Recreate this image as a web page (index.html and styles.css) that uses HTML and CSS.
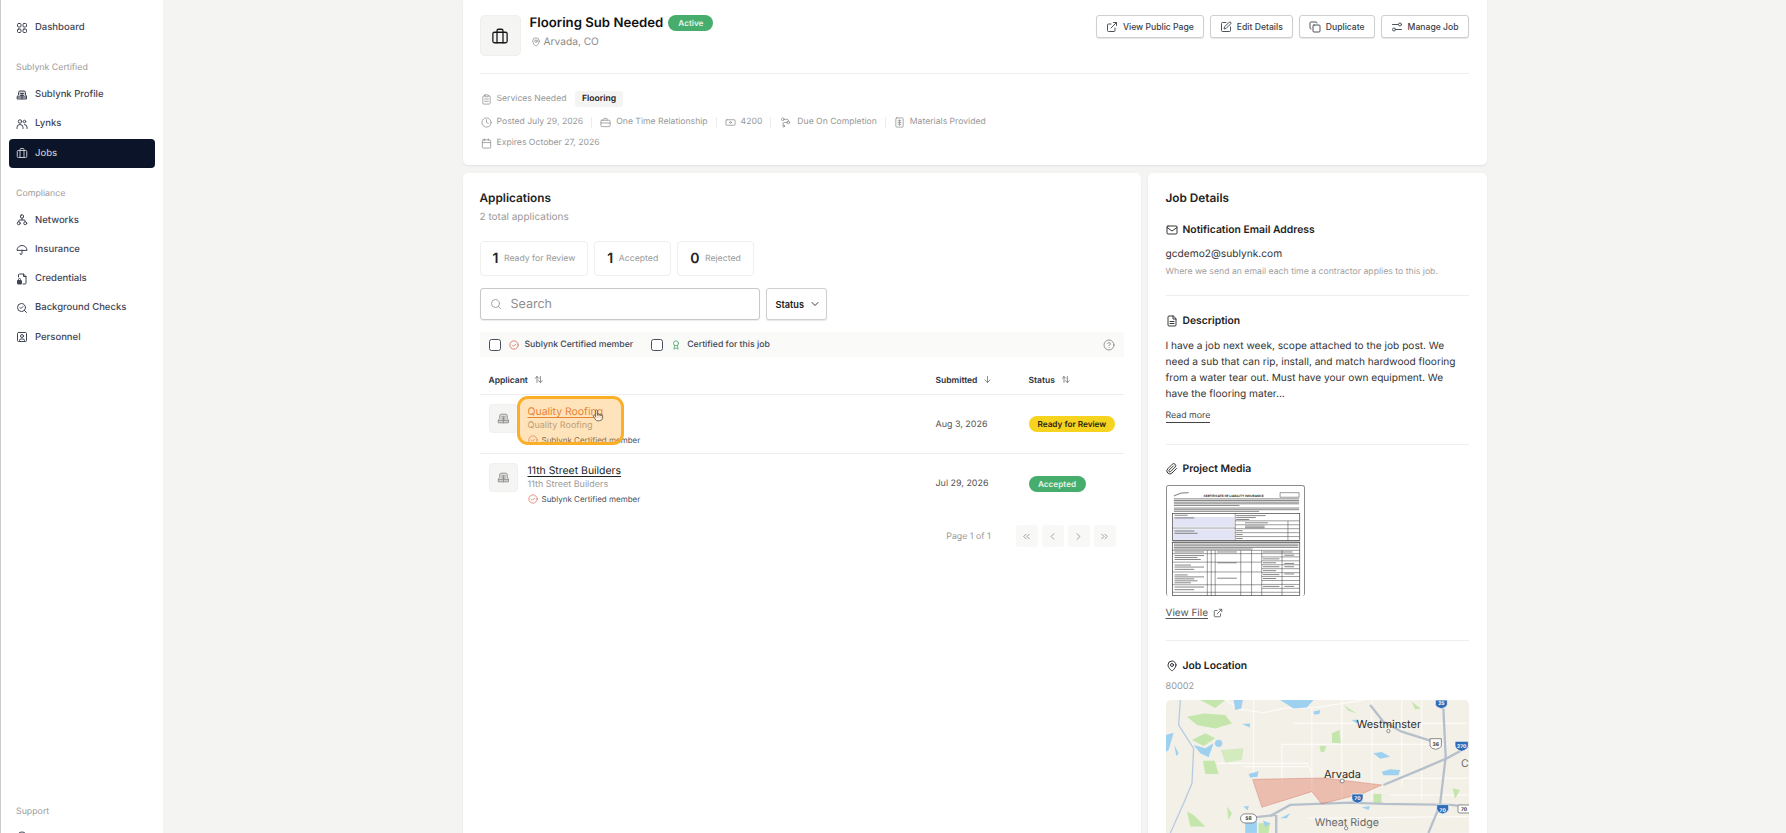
FILE: index.html
```html
<!DOCTYPE html>
<html lang="en">
  <head>
    <meta charset="UTF-8" />
    <meta name="viewport" content="width=device-width, initial-scale=1.0" />
    <title>Flooring Sub Needed</title>
    <link rel="stylesheet" href="styles.css">
  </head>
  <body>
    <svg class="icon-defs" aria-hidden="true">
      <symbol id="i-grid" viewBox="0 0 24 24"><rect x="3" y="3" width="7" height="7" rx="2"/><rect x="14" y="3" width="7" height="7" rx="2"/><rect x="3" y="14" width="7" height="7" rx="2"/><rect x="14" y="14" width="7" height="7" rx="2"/></symbol>
      <symbol id="i-building" viewBox="0 0 24 24"><path d="M3 20h18v-6l-2-2V7a3 3 0 0 0-3-3H8a3 3 0 0 0-3 3v5l-2 2z" fill="currentColor" fill-opacity=".25"/><path d="M9 9h6M9 13h6M3 16h18M12 9v11"/></symbol>
      <symbol id="i-users" viewBox="0 0 24 24"><circle cx="8" cy="7" r="3.5"/><circle cx="17" cy="7" r="2.5"/><path d="M2 21v-2a6 6 0 0 1 12 0v2M17 13a5 5 0 0 1 5 5v3"/></symbol>
      <symbol id="i-case" viewBox="0 0 24 24"><rect x="2.5" y="7" width="19" height="14" rx="2"/><path d="M8 21V5a2 2 0 0 1 2-2h4a2 2 0 0 1 2 2v16"/></symbol>
      <symbol id="i-network" viewBox="0 0 24 24"><rect x="9" y="2" width="6" height="6" rx="1.5"/><circle cx="5.5" cy="18.5" r="3"/><circle cx="18.5" cy="18.5" r="3"/><path d="M12 8v4M5.5 15.5V14a2 2 0 0 1 2-2h9a2 2 0 0 1 2 2v1.500"/></symbol>
      <symbol id="i-umbrella" viewBox="0 0 24 24"><path d="M2 12a10 9 0 0 1 20 0z"/><path d="M12 12v7a2 2 0 0 1-4 0"/></symbol>
      <symbol id="i-file-lock" viewBox="0 0 24 24"><path d="M5 8V4a2 2 0 0 1 2-2h8l5 5v13a2 2 0 0 1-2 2h-4"/><path d="M15 2v5h5"/><rect x="3" y="15" width="8" height="7" rx="1" fill="currentColor"/><path d="M5 15v-2a2 2 0 0 1 4 0v2"/></symbol>
      <symbol id="i-search-check" viewBox="0 0 24 24"><circle cx="11" cy="11" r="8"/><path d="m21 21-4.300-4.300M8 11l2 2 4-4"/></symbol>
      <symbol id="i-badge" viewBox="0 0 24 24"><rect x="3" y="3" width="18" height="18" rx="2"/><circle cx="12" cy="10" r="3"/><path d="M7 21v-2a3 3 0 0 1 3-3h4a3 3 0 0 1 3 3v2"/></symbol>
      <symbol id="i-help" viewBox="0 0 24 24"><circle cx="12" cy="12" r="10"/><path d="M9.100 9a3 3 0 0 1 5.800 1c0 2-3 3-3 3M12 17h.01"/></symbol>
      <symbol id="i-pin" viewBox="0 0 24 24"><path d="M20 10c0 6-8 12-8 12s-8-6-8-12a8 8 0 0 1 16 0z"/><circle cx="12" cy="10" r="3"/></symbol>
      <symbol id="i-external" viewBox="0 0 24 24"><path d="M18 14v5a2 2 0 0 1-2 2H5a2 2 0 0 1-2-2V8a2 2 0 0 1 2-2h5M15 3h6v6M10 14 21 3"/></symbol>
      <symbol id="i-edit" viewBox="0 0 24 24"><path d="M12 3H5a2 2 0 0 0-2 2v14a2 2 0 0 0 2 2h14a2 2 0 0 0 2-2v-7"/><path d="M18.400 2.600a2.100 2.100 0 0 1 3 3L12 15l-4 1 1-4z"/></symbol>
      <symbol id="i-copy" viewBox="0 0 24 24"><rect x="8" y="8" width="14" height="14" rx="2"/><path d="M4 16a2 2 0 0 1-2-2V4a2 2 0 0 1 2-2h10a2 2 0 0 1 2 2"/></symbol>
      <symbol id="i-sliders" viewBox="0 0 24 24"><path d="M14 7H3M21 17H10"/><circle cx="18" cy="7" r="3"/><circle cx="6" cy="17" r="3"/></symbol>
      <symbol id="i-clipboard" viewBox="0 0 24 24"><rect x="8" y="2" width="8" height="4" rx="1"/><path d="M16 4h2a2 2 0 0 1 2 2v14a2 2 0 0 1-2 2H6a2 2 0 0 1-2-2V6a2 2 0 0 1 2-2h2M8 11h8M8 16h8"/></symbol>
      <symbol id="i-clock" viewBox="0 0 24 24"><circle cx="12" cy="12" r="10"/><path d="M12 6v6l4 2"/></symbol>
      <symbol id="i-briefcase" viewBox="0 0 24 24"><rect x="2" y="7" width="20" height="14" rx="2"/><path d="M16 7V5a2 2 0 0 0-2-2h-4a2 2 0 0 0-2 2v2M2 13h20"/></symbol>
      <symbol id="i-banknote" viewBox="0 0 24 24"><rect x="2" y="6" width="20" height="12" rx="2"/><circle cx="12" cy="12" r="2"/></symbol>
      <symbol id="i-route" viewBox="0 0 24 24"><circle cx="6" cy="5" r="3"/><circle cx="18" cy="12" r="3"/><circle cx="8" cy="20" r="2"/><path d="M9 5h6a3 3 0 0 1 0 7H9a3 3 0 0 0 0 6"/></symbol>
      <symbol id="i-receipt" viewBox="0 0 24 24"><rect x="4" y="2" width="16" height="20" rx="2"/><path d="M9 8h6M9 12h6M9 16h6M12 6v12"/></symbol>
      <symbol id="i-calendar" viewBox="0 0 24 24"><rect x="3" y="4" width="18" height="18" rx="2"/><path d="M16 2v4M8 2v4M3 10h18"/></symbol>
      <symbol id="i-search" viewBox="0 0 24 24"><circle cx="11" cy="11" r="8"/><path d="m21 21-4.300-4.300"/></symbol>
      <symbol id="i-chevron" viewBox="0 0 24 24"><path d="m6 9 6 6 6-6"/></symbol>
      <symbol id="i-left" viewBox="0 0 24 24"><path d="m15 18-6-6 6-6"/></symbol>
      <symbol id="i-right" viewBox="0 0 24 24"><path d="m9 18 6-6-6-6"/></symbol>
      <symbol id="i-dleft" viewBox="0 0 24 24"><path d="m11 17-5-5 5-5M18 17l-5-5 5-5"/></symbol>
      <symbol id="i-dright" viewBox="0 0 24 24"><path d="m6 17 5-5-5-5M13 17l5-5-5-5"/></symbol>
      <symbol id="i-check-circle" viewBox="0 0 24 24"><circle cx="12" cy="12" r="10"/><path d="m8 12 3 3 5-5"/></symbol>
      <symbol id="i-award" viewBox="0 0 24 24"><circle cx="12" cy="8" r="6"/><path d="M8.500 13 7 22l5-3 5 3-1.500-9"/></symbol>
      <symbol id="i-sort" viewBox="0 0 24 24"><path d="M8 20V4M3 9l5-5 5 5M17 4v16M12 15l5 5 5-5"/></symbol>
      <symbol id="i-down" viewBox="0 0 24 24"><path d="M12 4v16M5 13l7 7 7-7"/></symbol>
      <symbol id="i-mail" viewBox="0 0 24 24"><rect x="2" y="4" width="20" height="16" rx="2"/><path d="m2 7 10 7 10-7"/></symbol>
      <symbol id="i-file" viewBox="0 0 24 24"><path d="M14 2H6a2 2 0 0 0-2 2v16a2 2 0 0 0 2 2h12a2 2 0 0 0 2-2V8z"/><path d="M14 2v6h6M8 13h8M8 17h8"/></symbol>
      <symbol id="i-clip" viewBox="0 0 24 24"><path d="m21 11-9 9a6 6 0 0 1-8.500-8.500l9-9a4 4 0 0 1 5.700 5.700l-9 9a2 2 0 0 1-2.900-2.900l8.500-8.500"/></symbol>
      <symbol id="i-hand" viewBox="0 0 24 24"><path d="M8 13V4.500a1.500 1.500 0 0 1 3 0V12M11 11.500a1.500 1.500 0 0 1 3 0V12M14 12a1.500 1.500 0 0 1 3 0v1M17 13a1.500 1.500 0 0 1 3 0v3a6 6 0 0 1-6 6h-2c-2.500 0-4-1-5-3l-3-5a1.500 1.500 0 0 1 2.600-1.500L8 15" fill="#fff" fill-opacity=".7"/></symbol>
    </svg>

    <div class="app">
      <aside class="sidebar">
        <a class="nav-item nav-first"><svg class="icon"><use href="#i-grid"/></svg>Dashboard</a>

        <div class="nav-label">Sublynk Certified</div>
        <a class="nav-item"><svg class="icon"><use href="#i-building"/></svg>Sublynk Profile</a>
        <a class="nav-item"><svg class="icon"><use href="#i-users"/></svg>Lynks</a>
        <a class="nav-item active"><svg class="icon"><use href="#i-case"/></svg>Jobs</a>

        <div class="nav-label">Compliance</div>
        <a class="nav-item"><svg class="icon"><use href="#i-network"/></svg>Networks</a>
        <a class="nav-item"><svg class="icon"><use href="#i-umbrella"/></svg>Insurance</a>
        <a class="nav-item"><svg class="icon"><use href="#i-file-lock"/></svg>Credentials</a>
        <a class="nav-item"><svg class="icon"><use href="#i-search-check"/></svg>Background Checks</a>
        <a class="nav-item"><svg class="icon"><use href="#i-badge"/></svg>Personnel</a>

        <div class="nav-label nav-support">Support</div>
        <a class="nav-item"><svg class="icon"><use href="#i-help"/></svg>Help</a>
      </aside>

      <main class="content">
        <section class="card job-card">
          <div class="job-head">
            <div class="job-logo"><svg class="icon"><use href="#i-case"/></svg></div>
            <div class="job-title-block">
              <div class="job-title-row">
                <h1>Flooring Sub Needed</h1>
                <span class="pill pill-green pill-active">Active</span>
              </div>
              <div class="job-location"><svg class="icon"><use href="#i-pin"/></svg>Arvada, CO</div>
            </div>
            <div class="job-actions">
              <button class="btn"><svg class="icon"><use href="#i-external"/></svg>View Public Page</button>
              <button class="btn"><svg class="icon"><use href="#i-edit"/></svg>Edit Details</button>
              <button class="btn"><svg class="icon"><use href="#i-copy"/></svg>Duplicate</button>
              <button class="btn"><svg class="icon"><use href="#i-sliders"/></svg>Manage Job</button>
            </div>
          </div>
          <div class="job-meta">
            <div class="meta-row meta-services">
              <span class="meta-item"><svg class="icon"><use href="#i-clipboard"/></svg>Services Needed</span>
              <span class="tag">Flooring</span>
            </div>
            <div class="meta-row">
              <span class="meta-item"><svg class="icon"><use href="#i-clock"/></svg>Posted July 29, 2026</span>
              <span class="meta-item"><svg class="icon"><use href="#i-briefcase"/></svg>One Time Relationship</span>
              <span class="meta-item"><svg class="icon"><use href="#i-banknote"/></svg>4200</span>
              <span class="meta-item"><svg class="icon icon-route"><use href="#i-route"/></svg>Due On Completion</span>
              <span class="meta-item"><svg class="icon"><use href="#i-receipt"/></svg>Materials Provided</span>
            </div>
            <div class="meta-row meta-expires">
              <span class="meta-item"><svg class="icon"><use href="#i-calendar"/></svg>Expires October 27, 2026</span>
            </div>
          </div>
        </section>

        <div class="columns">
          <section class="card apps-card">
            <h2>Applications</h2>
            <p class="apps-count">2 total applications</p>

            <div class="stats">
              <div class="stat"><b>1</b><span>Ready for Review</span></div>
              <div class="stat"><b>1</b><span>Accepted</span></div>
              <div class="stat"><b>0</b><span>Rejected</span></div>
            </div>

            <div class="filters">
              <div class="search"><svg class="icon"><use href="#i-search"/></svg>Search</div>
              <button class="btn status-btn">Status<svg class="icon"><use href="#i-chevron"/></svg></button>
            </div>

            <div class="cert-band">
              <span class="check"></span>
              <svg class="icon icon-red"><use href="#i-check-circle"/></svg>
              <span class="cert-text">Sublynk Certified member</span>
              <span class="check check-second"></span>
              <svg class="icon icon-green"><use href="#i-award"/></svg>
              <span class="cert-text">Certified for this job</span>
              <svg class="icon icon-help"><use href="#i-help"/></svg>
            </div>

            <div class="table-row table-head">
              <div class="col-applicant">Applicant<svg class="icon"><use href="#i-sort"/></svg></div>
              <div>Submitted<svg class="icon"><use href="#i-down"/></svg></div>
              <div>Status<svg class="icon"><use href="#i-sort"/></svg></div>
            </div>

            <div class="table-row app-row">
              <div class="col-applicant applicant">
                <div class="avatar"><svg class="icon"><use href="#i-building"/></svg></div>
                <div class="app-info">
                  <a class="app-name app-name-hover">Quality Roofing</a>
                  <div class="app-sub">Quality Roofing</div>
                  <div class="app-cert"><svg class="icon icon-red"><use href="#i-check-circle"/></svg>Sublynk Certified member</div>
                </div>
              </div>
              <div class="app-date">Aug 3, 2026</div>
              <div class="app-status"><span class="pill pill-yellow">Ready for Review</span></div>
              <div class="highlight"><svg class="icon hand"><use href="#i-hand"/></svg></div>
            </div>

            <div class="table-row app-row app-row-last">
              <div class="col-applicant applicant">
                <div class="avatar"><svg class="icon"><use href="#i-building"/></svg></div>
                <div class="app-info">
                  <a class="app-name">11th Street Builders</a>
                  <div class="app-sub">11th Street Builders</div>
                  <div class="app-cert"><svg class="icon icon-red"><use href="#i-check-circle"/></svg>Sublynk Certified member</div>
                </div>
              </div>
              <div class="app-date">Jul 29, 2026</div>
              <div class="app-status"><span class="pill pill-green pill-table">Accepted</span></div>
            </div>

            <div class="pager">
              <span class="pager-text">Page 1 of 1</span>
              <span class="pager-btn"><svg class="icon"><use href="#i-dleft"/></svg></span>
              <span class="pager-btn"><svg class="icon"><use href="#i-left"/></svg></span>
              <span class="pager-btn"><svg class="icon"><use href="#i-right"/></svg></span>
              <span class="pager-btn"><svg class="icon"><use href="#i-dright"/></svg></span>
            </div>
          </section>

          <section class="card details-card">
            <h2>Job Details</h2>

            <div class="detail detail-first">
              <h3><svg class="icon"><use href="#i-mail"/></svg>Notification Email Address</h3>
              <div class="detail-email">gcdemo2@sublynk.com</div>
              <p class="detail-help">Where we send an email each time a contractor applies to this job.</p>
            </div>

            <div class="detail detail-desc">
              <h3><svg class="icon"><use href="#i-file"/></svg>Description</h3>
              <p class="detail-text">I have a job next week, scope attached to the job post. We need a sub that can rip, install, and match hardwood flooring from a water tear out. Must have your own equipment. We have the flooring mater...</p>
              <a class="read-more">Read more</a>
            </div>

            <div class="detail detail-media">
              <h3><svg class="icon"><use href="#i-clip"/></svg>Project Media</h3>
              <svg class="doc-thumb" viewBox="47 105 418 333">
                <rect x="47" y="105" width="418" height="333" fill="#fff"/>
                <text x="250" y="137" class="doc-title">CERTIFICATE OF LIABILITY INSURANCE</text>
                <path d="M68 134q20-12 45-10" class="doc-box"/>
                <path d="M392 124h58v14h-58z" class="doc-line"/>
                <path d="M68 143h382M68 148h382M68 153h382M68 158h382M68 163h200M68 171h382M68 176h382M68 181h260" class="doc-text"/>
                <rect x="64" y="188" width="388" height="82" class="doc-box"/>
                <rect x="66" y="198" width="186" height="30" fill="#e2e3f4"/>
                <rect x="66" y="236" width="186" height="32" fill="#e2e3f4"/>
                <path d="M255 188v82M64 232h191M255 210h196M255 222h196M255 234h196M255 246h196M255 258h196M416 210v60" class="doc-line"/>
                <path d="M70 193h40M70 201h60M70 241h60M70 248h70M258 194h90M258 200h60M258 206h40M285 216h70M285 226h60M285 231h60M258 240h20M258 252h20M258 264h20" class="doc-text"/>
                <rect x="64" y="276" width="388" height="162" class="doc-box"/>
                <path d="M64 272h388M64 300h388M64 310h388" class="doc-line"/>
                <path d="M68 281h380M68 286h380M68 291h380M68 296h240M70 305h90M200 305h60M340 305h90" class="doc-text"/>
                <path d="M170 300v138M182 300v138M194 300v138M272 300v138M305 300v138M336 300v138M398 300v138M64 336h272M64 366h272M64 405h272M64 428h272M336 320h116M336 332h116M336 344h116M336 356h116M336 368h116M336 380h116M336 392h116M336 404h116M336 416h116M336 428h116" class="doc-line"/>
                <path d="M70 316h90M70 322h70M70 328h80M70 345h50M70 351h90M70 358h60M70 375h40M70 381h90M70 387h60M70 393h70M70 399h50M70 412h90M70 420h60M200 338h60M200 385h60M340 326h50M340 338h40M340 350h50M340 362h40M340 374h50M340 386h40M340 410h50M405 315h30M405 340h30M405 350h30M405 372h30M405 410h30" class="doc-text"/>
              </svg>
              <a class="view-file"><span>View File</span><svg class="icon"><use href="#i-external"/></svg></a>
            </div>

            <div class="detail detail-location">
              <h3><svg class="icon"><use href="#i-pin"/></svg>Job Location</h3>
              <div class="detail-zip">80002</div>
              <svg class="map" viewBox="47 150 910 399">
                <rect x="47" y="150" width="910" height="399" fill="#f3f0e8"/>
                <g class="map-road">
                  <path d="M225 150 270 178 340 188 400 175 500 172 640 150"/>
                  <path d="M310 150v240M485 172v230M575 150v300M665 150v300M755 150v260M815 150v300"/>
                  <path d="M430 220h520M395 283h500M395 283v110M200 340h270l15 30v60"/>
                  <path d="M280 350h190M755 385h200M720 435h235M470 505 955 500"/>
                </g>
                <g class="map-green">
                  <path d="M110 200 160 190 225 195 245 220 195 235 140 225z"/>
                  <path d="M125 270 165 250 195 265 160 288z"/>
                  <path d="M158 332h35l12 40h-40z"/>
                  <path d="M545 250 568 240 572 280 546 278z"/>
                  <path d="M508 288h20l-6 18h-10z"/>
                  <path d="M580 165 620 190 595 182z"/>
                  <path d="M670 432h24v28h-24z"/>
                  <path d="M908 415 930 420 915 446z"/>
                  <path d="M110 485 130 495 165 530 120 530z"/>
                  <path d="M230 470 245 490 235 510z"/>
                  <path d="M150 150h75l-30 24z"/>
                  <path d="M785 155 812 175 795 178z"/>
                  <path d="M325 520h35l-5 29h-30z"/>
                </g>
                <path d="M212 300 280 295 275 330 225 338z" fill="#d4ebc0"/>
                <g class="map-water">
                  <path d="M250 150h28l-5 25-18 5z"/>
                  <path d="M390 150h100l-20 22-40 3z"/>
                  <path d="M490 184 510 180 508 192 492 193z"/>
                  <path d="M130 285 165 295 190 280 175 322 150 310z"/>
                  <circle cx="205" cy="280" r="11"/>
                  <path d="M47 255 70 248 55 300 47 305z"/>
                  <path d="M72 285 85 310 78 318z"/>
                  <path d="M295 372 325 364 322 380 300 383z"/>
                  <path d="M280 470 296 468 292 482z"/>
                  <path d="M285 512h35v37h-35z"/>
                  <path d="M338 512 360 520 345 532z"/>
                  <path d="M390 505 420 490 410 505z"/>
                  <path d="M670 310 695 306 720 320 690 326z"/>
                  <path d="M695 365 720 358 750 360 745 376 700 376z"/>
                  <path d="M635 472 660 468 655 480z"/>
                  <path d="M605 210 625 208 620 220z"/>
                  <path d="M275 222 300 220 298 232z"/>
                </g>
                <path d="M90 150 85 225 130 295 125 400 100 460 60 549" class="map-river"/>
                <g class="map-highway">
                  <path d="M660 165 700 215 755 245 850 275"/>
                  <path d="M880 175 887 320 870 465 835 549"/>
                  <path d="M700 405 820 355 890 325 955 290"/>
                  <path d="M360 498 420 465 600 458 700 462 900 465 955 470"/>
                  <path d="M270 507 375 495M378 495V549"/>
                </g>
                <path d="M307 388 520 384 695 405 640 430 515 462 485 425 335 472z" class="map-area"/>
                <circle cx="576" cy="393" r="6" class="map-dot"/>
                <circle cx="715" cy="243" r="5" class="map-dot"/>
                <circle cx="588" cy="535" r="5" class="map-dot"/>
                <g class="shield shield-blue">
                  <path d="M605 432h34v14q-3 12-17 14-14-2-17-14z"/>
                  <text x="622" y="449">70</text>
                  <path d="M860 464h36v14q-3 12-18 14-15-2-18-14z"/>
                  <text x="878" y="485">70</text>
                  <path d="M915 274h40v14q-3 12-20 16-17-4-20-16z"/>
                  <text x="935" y="295">270</text>
                  <path d="M856 150h36v14q-3 9-18 12-15-3-18-12z"/>
                  <text x="874" y="164">25</text>
                </g>
                <g class="shield shield-white">
                  <path d="M840 266h34v22q-3 8-17 10-14-2-17-10z"/>
                  <text x="857" y="287">36</text>
                  <rect x="271" y="492" width="48" height="27" rx="13"/>
                  <text x="295" y="510">58</text>
                  <rect x="924" y="465" width="40" height="24" rx="4"/>
                  <text x="942" y="482">70</text>
                </g>
                <text x="716" y="234" class="map-city">Westminster</text>
                <text x="577" y="384" class="map-city">Arvada</text>
                <text x="590" y="528" class="map-city map-town">Wheat Ridge</text>
                <text x="945" y="352" class="map-city map-town">C</text>
              </svg>
            </div>
          </section>
        </div>
      </main>
    </div>
  </body>
</html>
```

FILE: styles.css
```css
* {
  box-sizing: border-box;
}
html,
body {
  height: 100%;
}
body {
  margin: 0;
  font-family: Inter, "Liberation Sans", sans-serif;
  text-rendering: geometricPrecision;
  color: #18181b;
  background: #f4f4f3;
  overflow: hidden;
}
.icon-defs {
  display: none;
}
.icon {
  width: 13px;
  height: 13px;
  flex: none;
  fill: none;
  stroke: currentColor;
  stroke-width: 2;
  stroke-linecap: round;
  stroke-linejoin: round;
}
.app {
  display: flex;
  height: 833px;
  overflow: hidden;
}

/* sidebar */
.sidebar {
  width: 163px;
  flex: none;
  background: #fff;
  border-left: 1px solid #ccc;
  padding: 0 8px;
}
.nav-item {
  display: flex;
  align-items: center;
  gap: 7px;
  height: 29.2px;
  padding-left: 7px;
  font-size: 9.5px;
  font-weight: 500;
  color: #3f4555;
  border-radius: 4px;
}
.nav-first {
  margin-top: 13px;
}
.nav-item .icon {
  width: 12px;
  height: 12px;
}
.nav-item.active {
  background: #0b1429;
  color: #c3c6cd;
}
.nav-label {
  margin-top: 19px;
  padding-left: 7px;
  height: 19px;
  line-height: 14px;
  font-size: 8.8px;
  color: #9a9a9a;
}
.nav-support {
  margin-top: 453px;
  height: 18px;
}

/* main column */
.content {
  flex: 1;
  display: flex;
  flex-direction: column;
  align-items: center;
}
.card {
  background: #fff;
  border-radius: 5px;
  box-shadow: 0 1px 2px rgba(0, 0, 0, 0.08);
}
.job-card {
  width: 1024px;
  height: 165px;
  flex: none;
  padding: 15px 18px 0 17px;
  border-radius: 0 0 5px 5px;
}
.job-head {
  display: flex;
  height: 59px;
  border-bottom: 1px solid #eeeeee;
}
.job-logo {
  width: 41px;
  height: 41px;
  display: flex;
  align-items: center;
  justify-content: center;
  background: #f5f5f4;
  border: 1px solid #efefee;
  border-radius: 5px;
}
.job-logo .icon {
  width: 18px;
  height: 18px;
  stroke-width: 1.7;
}
.job-title-block {
  margin-left: 9px;
}
.job-title-row {
  display: flex;
  align-items: center;
  gap: 5px;
  height: 16px;
}
h1 {
  margin: 0;
  font-size: 13.2px;
  font-weight: 600;
  color: #111;
}
.job-location {
  display: flex;
  align-items: center;
  gap: 2px;
  margin-top: 4px;
  font-size: 10.2px;
  line-height: 14px;
  color: #8a8a8a;
}
.job-location .icon {
  width: 10px;
  height: 10px;
  margin: 0 1px;
  stroke-width: 1.8;
}
.pill {
  display: inline-flex;
  align-items: center;
  height: 16px;
  padding: 0 9px;
  border-radius: 8px;
  font-size: 8.2px;
  font-weight: 600;
}
.pill-green {
  background: #46ad6c;
  color: #e6f5ea;
}
.pill-yellow {
  background: #f5d31f;
  color: #2a2410;
}
.pill-active {
  padding: 0 10px;
}
.pill-table {
  padding: 0 9.5px;
}
.job-actions {
  display: flex;
  gap: 6px;
  margin-left: auto;
}
.btn {
  display: flex;
  align-items: center;
  gap: 5px;
  height: 23px;
  padding: 0 9px;
  background: #fff;
  border: 1px solid #cfcfcf;
  border-radius: 3px;
  box-shadow: 0 1px 1px rgba(0, 0, 0, 0.1);
  font-family: inherit;
  font-size: 8.6px;
  font-weight: 500;
  color: #3a3f4a;
}
.btn .icon {
  width: 12px;
  height: 12px;
  stroke-width: 1.8;
}
.job-meta {
  padding-top: 17px;
}
.meta-row {
  display: flex;
  align-items: center;
  height: 14px;
  margin-top: 8px;
  margin-left: 1px;
  font-size: 8.65px;
  color: #979797;
}
.meta-services {
  height: 16px;
  margin-top: 0;
}
.meta-expires {
  margin-top: 7px;
}
.meta-item {
  display: flex;
  align-items: center;
  gap: 5px;
}
.meta-item .icon {
  width: 11px;
  height: 11px;
  stroke-width: 1.6;
  color: #8a8a8a;
}
.meta-item .icon-route {
  width: 13px;
}
.meta-item + .meta-item {
  margin-left: 8px;
  padding-left: 8px;
  border-left: 1px solid #ededed;
}
.tag {
  margin-left: 9px;
  padding: 0 6.5px;
  height: 16px;
  line-height: 16px;
  background: #f4f4f3;
  border-radius: 3px;
  font-size: 8.65px;
  font-weight: 600;
  color: #222;
}
.columns {
  display: flex;
  gap: 7px;
  width: 1024px;
  margin-top: 8px;
  flex: 1;
}

/* applications */
.apps-card {
  width: 678px;
  padding: 17px 17px 0;
  position: relative;
}
h2 {
  margin: 0;
  font-size: 11.8px;
  line-height: 16px;
  font-weight: 600;
  color: #222;
}
.apps-count {
  margin: 4px 0 0;
  font-size: 10px;
  line-height: 14px;
  color: #9a9a9a;
}
.stats {
  display: flex;
  gap: 6px;
  margin-top: 17px;
}
.stat {
  display: flex;
  align-items: center;
  gap: 5.5px;
  height: 35px;
  padding: 0 12px;
  border: 1px solid #efefee;
  border-radius: 4px;
}
.stat b {
  font-size: 14px;
  font-weight: 600;
  color: #222;
}
.stat span {
  font-size: 8.7px;
  color: #9a9a9a;
}
.filters {
  display: flex;
  gap: 6px;
  margin-top: 12px;
}
.search {
  display: flex;
  align-items: center;
  gap: 9px;
  width: 280px;
  height: 32px;
  padding-left: 9px;
  border: 1px solid #c8c8c8;
  border-radius: 3px;
  box-shadow: 0 1px 1px rgba(0, 0, 0, 0.08);
  font-size: 12.5px;
  color: #8f8f8f;
}
.search .icon {
  width: 12px;
  height: 12px;
  stroke-width: 1.6;
}
.status-btn {
  width: 61px;
  height: 32px;
  justify-content: space-between;
  font-size: 9.2px;
  font-weight: 600;
  padding: 0 8px 0 9px;
  color: #222;
}
.cert-band {
  display: flex;
  align-items: center;
  height: 25px;
  margin-top: 12px;
  padding: 0 9px;
  background: #fafaf9;
  font-size: 8.7px;
  font-weight: 500;
  color: #3f4555;
}
.check {
  width: 12px;
  height: 12px;
  border: 1px solid #4a5060;
  border-radius: 2.5px;
  background: #fff;
}
.check-second {
  margin-left: 18px;
}
.cert-band .icon {
  width: 10px;
  height: 10px;
  margin-left: 8px;
  margin-right: 6px;
}
.icon-red {
  color: #d9705f;
}
.icon-green {
  color: #4aa96c;
}
.cert-band .icon-help {
  width: 12px;
  height: 12px;
  margin-left: auto;
  margin-right: 0;
  color: #7d7d7d;
  stroke-width: 1.6;
}
.table-row {
  display: grid;
  grid-template-columns: 456px 93px 1fr;
  position: relative;
}
.table-head {
  height: 38px;
  padding-top: 18px;
  border-bottom: 1px solid #eeeeee;
  font-size: 8.5px;
  line-height: 12px;
  font-weight: 600;
  color: #2a3040;
}
.table-head .icon {
  width: 9px;
  height: 9px;
  margin-left: 6px;
  vertical-align: -1px;
  color: #666;
}
.col-applicant {
  padding-left: 9px;
}
.app-row {
  height: 59px;
  border-bottom: 1px solid #eeeeee;
  align-items: center;
}
.app-row-last {
  border-bottom: none;
}
.applicant {
  display: flex;
  gap: 10px;
  align-self: start;
  padding-top: 9px;
}
.avatar {
  width: 29px;
  height: 29px;
  display: flex;
  align-items: center;
  justify-content: center;
  background: #f5f5f4;
  border: 1px solid #efefee;
  border-radius: 4px;
  color: #8a8a8a;
}
.avatar .icon {
  stroke-width: 1.6;
}
.app-info {
  margin-top: -5px;
}
.app-name {
  display: inline-block;
  font-size: 10.45px;
  line-height: 14px;
  color: #222;
  text-decoration: underline;
  text-underline-offset: 2px;
}
.app-name-hover {
  color: #dd7038;
}
.app-sub {
  font-size: 9px;
  line-height: 14px;
  color: #9a9a9a;
}
.app-cert {
  display: flex;
  align-items: center;
  gap: 4px;
  font-size: 8px;
  line-height: 14px;
  color: #4a4f5a;
}
.app-cert .icon {
  width: 10px;
  height: 10px;
  stroke-width: 1.8;
}
.app-date {
  font-size: 8.95px;
  color: #555;
}
.app-status {
  display: flex;
}
.highlight {
  position: absolute;
  left: 37px;
  top: 1px;
  width: 107px;
  height: 49px;
  background: rgba(255, 170, 50, 0.33);
  border: 3px solid #fbae27;
  border-radius: 11px;
}
.hand {
  position: absolute;
  left: 71px;
  top: 8px;
  width: 14px;
  height: 16px;
  color: #6b5a40;
  stroke-width: 1.5;
}
.pager {
  display: flex;
  align-items: center;
  justify-content: flex-end;
  gap: 4px;
  margin-top: 12px;
  padding-right: 8px;
}
.pager-text {
  margin-right: 21px;
  font-size: 8.8px;
  color: #999;
}
.pager-btn {
  width: 22px;
  height: 22px;
  display: flex;
  align-items: center;
  justify-content: center;
  background: #f8f8f7;
  border-radius: 3px;
  color: #777;
}
.pager-btn .icon {
  width: 11px;
  height: 11px;
  stroke-width: 1.5;
}

/* job details */
.details-card {
  width: 339px;
  padding: 17px 18px 0 18px;
}
.detail {
  padding: 17px 0 17px;
  border-bottom: 1px solid #eeeeee;
}
.detail-desc {
  padding-top: 18px;
  padding-bottom: 21px;
}
.detail-media {
  padding-bottom: 20px;
}
.detail-location {
  padding-top: 18px;
  border-bottom: none;
}
h3 {
  display: flex;
  align-items: center;
  gap: 5px;
  margin: 0;
  font-size: 10.35px;
  line-height: 14px;
  font-weight: 600;
  color: #222;
}
h3 .icon {
  width: 12px;
  height: 12px;
  stroke-width: 1.8;
}
.detail-email {
  margin-top: 10px;
  font-size: 10.2px;
  line-height: 14px;
  color: #333;
}
.detail-help {
  margin: 5px 0 0;
  font-size: 8.7px;
  line-height: 12px;
  color: #9f9f9f;
}
.detail-text {
  margin: 10px 0 0;
  font-size: 10.15px;
  line-height: 16px;
  color: #333;
}
.read-more {
  display: inline-block;
  margin-top: 3px;
  font-size: 8.8px;
  line-height: 12px;
  color: #444;
  border-bottom: 1px solid #444;
}
.doc-thumb {
  display: block;
  width: 139px;
  height: 111px;
  margin-top: 9px;
  border: 1px solid #8c8c8c;
  border-bottom: none;
  border-radius: 3px;
}
.doc-title {
  font-size: 9.5px;
  font-weight: 700;
  text-anchor: middle;
  fill: #222;
}
.doc-line {
  fill: none;
  stroke: #444;
  stroke-width: 1.6;
}
.doc-text {
  fill: none;
  stroke: #666;
  stroke-width: 2.4;
}
.doc-box {
  fill: none;
  stroke: #333;
  stroke-width: 2;
}
.view-file {
  display: flex;
  align-items: center;
  gap: 5px;
  margin-top: 10px;
  font-size: 10px;
  line-height: 14px;
  color: #555;
}
.view-file span {
  text-decoration: underline;
  text-underline-offset: 2px;
}
.view-file .icon {
  width: 10px;
  height: 10px;
}
.detail-zip {
  margin-top: 8px;
  font-size: 9.2px;
  line-height: 12px;
  color: #9a9a9a;
}
.map {
  display: block;
  width: 303px;
  height: 133px;
  margin-top: 7px;
  border-radius: 5px 5px 0 0;
}
.map-green path {
  fill: #c4e5ab;
}
.map-water path,
.map-water circle {
  fill: #9ed0f0;
}
.map-road path {
  fill: none;
  stroke: #fcfbf8;
  stroke-width: 3.5;
}
.map-river {
  fill: none;
  stroke: #b7cbe0;
  stroke-width: 4;
}
.map-highway path {
  fill: none;
  stroke: #b6c0cb;
  stroke-width: 7;
}
.map-area {
  fill: rgba(224, 120, 95, 0.42);
  stroke: rgba(200, 100, 80, 0.5);
  stroke-width: 2;
}
.map-dot {
  fill: #fff;
  stroke: #555;
  stroke-width: 2;
}
.map-city {
  font-family: Inter, "Liberation Sans", sans-serif;
  font-size: 33px;
  text-anchor: middle;
  fill: #2c2c2c;
}
.map-town {
  fill: #6b6b6b;
  font-size: 32px;
}
.shield text {
  font-size: 15px;
  font-weight: 700;
  text-anchor: middle;
}
.shield-blue path {
  fill: #2f6cb5;
  stroke: #fff;
  stroke-width: 2;
}
.shield-blue text {
  fill: #fff;
}
.shield-white path,
.shield-white rect {
  fill: #fff;
  stroke: #555;
  stroke-width: 2;
}
.shield-white text {
  fill: #333;
}
```
